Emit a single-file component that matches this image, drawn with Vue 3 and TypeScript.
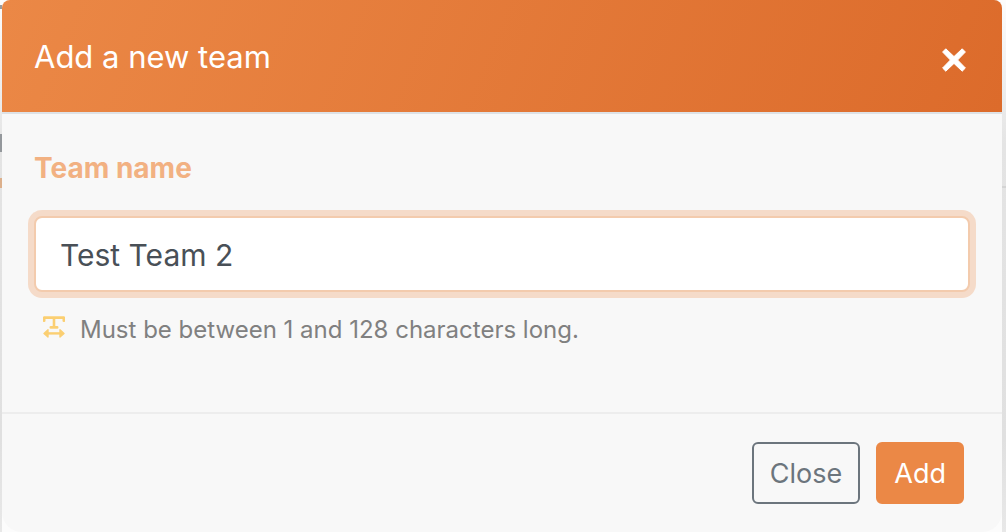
<script setup lang="ts">
import { ref } from 'vue'

const open = ref<boolean>(true)
const teamName = ref<string>('Test Team 2')
const minLength = 1
const maxLength = 128

function close(): void {
  open.value = false
}

function add(): void {
  const length = teamName.value.trim().length
  if (length >= minLength && length <= maxLength) close()
}
</script>

<template>
  <main class="backdrop">
    <span class="peek peek-top"></span>
    <span class="peek peek-text"></span>
    <span class="peek peek-accent"></span>
    <span class="peek peek-rule"></span>

    <form v-if="open" class="modal" role="dialog" aria-labelledby="modal-title" @submit.prevent="add">
      <header class="header">
        <h1 id="modal-title" class="title">Add a new team</h1>
        <button type="button" class="dismiss" aria-label="Dismiss" @click="close">
          <svg viewBox="0 0 24 24" width="24" height="24" aria-hidden="true">
            <path d="M3.8 0.8 L12 8.6 L20.2 0.8 L23.4 4 L15.6 12 L23.4 20 L20.2 23.2 L12 15.4 L3.8 23.2 L0.6 20 L8.4 12 L0.6 4 Z" fill="#fff" stroke="#fff" stroke-width="1" stroke-linejoin="round" />
          </svg>
        </button>
      </header>

      <section class="body">
        <label class="label" for="team-name">Team name</label>
        <input id="team-name" v-model="teamName" class="input" type="text" aria-describedby="team-help" />
        <p id="team-help" class="help">
          <svg class="help-icon" viewBox="0 0 22 22" width="22" height="22" aria-hidden="true">
            <path d="M1.2 4.8 V1.6 H20.8 V4.8 M11 1.6 V11.2 M7.8 11.4 H14.2" fill="none" stroke="#fbcf72" stroke-width="2.6" stroke-linejoin="round" stroke-linecap="round" />
            <path d="M3 17.4 H19" fill="none" stroke="#fbcf72" stroke-width="2.4" />
            <path d="M1 17.4 L5 13.8 V21 Z M21 17.4 L17 13.8 V21 Z" fill="#fbcf72" stroke="#fbcf72" stroke-width="1.4" stroke-linejoin="round" />
          </svg>
          <span>Must be between {{ minLength }} and {{ maxLength }} characters long.</span>
        </p>
      </section>

      <footer class="footer">
        <button type="button" class="button button-outline" @click="close">Close</button>
        <button type="submit" class="button button-primary">Add</button>
      </footer>
    </form>
  </main>
</template>

<style>
body {
  margin: 0;
  background: #fcfcfc;
}
</style>

<style scoped>
.backdrop {
  position: relative;
  padding: 0 4px 0 2px;
  overflow: hidden;
  background:
    linear-gradient(#fcfcfc, #fcfcfc) 2px 100% / calc(100% - 6px) 24px no-repeat,
    linear-gradient(#fcfcfc, #e4e4e4 144px, #e0e0e0 440px, #e8e8e8);
  font-family: Inter, "Liberation Sans", sans-serif;
}

.peek {
  position: absolute;
  left: 0;
  width: 2px;
}

.peek-top {
  top: 5px;
  height: 4px;
  background: #9a9c9e;
}

.peek-text {
  top: 134px;
  height: 18px;
  background: #94989c;
}

.peek-accent {
  top: 178px;
  height: 10px;
  background: #dcb08c;
}

.peek-rule {
  top: 186px;
  right: 0;
  left: auto;
  width: 4px;
  height: 2px;
  background: #d4d4d4;
}

.modal {
  border-radius: 8px 8px 20px 20px;
  background: #f8f8f8;
}

.header {
  display: flex;
  align-items: center;
  justify-content: space-between;
  padding: 32px;
  border-bottom: 2px solid #dee2e6;
  border-radius: 8px 8px 0 0;
  background: linear-gradient(112deg, #eb8846, #dc6b2b) padding-box;
}

.title {
  margin: 0;
  padding-top: 2px;
  color: #fff;
  font-size: 31px;
  font-weight: 400;
  line-height: 46px;
}

.dismiss {
  display: flex;
  margin: 8px 4px 0 0;
  padding: 0;
  border: 0;
  background: none;
  cursor: pointer;
}

.body {
  padding: 32px;
  border-bottom: 2px solid #ededed;
}

.label {
  display: block;
  margin-bottom: 26px;
  color: #f2b182;
  font-size: 28px;
  font-weight: 700;
  line-height: 44px;
}

.input {
  display: block;
  box-sizing: border-box;
  width: 100%;
  padding: 14px 24px 12px;
  border: 2px solid #f3cbad;
  border-radius: 8px;
  outline: 0;
  background: #fff;
  box-shadow: 0 0 0 6px #f5dbc9;
  color: #495057;
  font-family: inherit;
  font-size: 30px;
  line-height: 46px;
}

.help {
  display: flex;
  gap: 15px;
  margin: 20px 0 32px;
  padding-left: 9px;
  color: #808080;
  font-size: 24px;
  line-height: 36px;
}

.help-icon {
  flex: none;
  margin-top: 4px;
}

.footer {
  display: flex;
  justify-content: flex-end;
  gap: 16px;
  padding: 28px 38px;
}

.button {
  padding: 12px 16px 10px;
  border: 2px solid;
  border-radius: 6px;
  font-family: inherit;
  font-size: 27px;
  line-height: 36px;
  cursor: pointer;
}

.button-outline {
  border-color: #6c757d;
  background: transparent;
  color: #6c757d;
}

.button-primary {
  border-color: #eb8846;
  background: #eb8846;
  color: #fff;
}
</style>
